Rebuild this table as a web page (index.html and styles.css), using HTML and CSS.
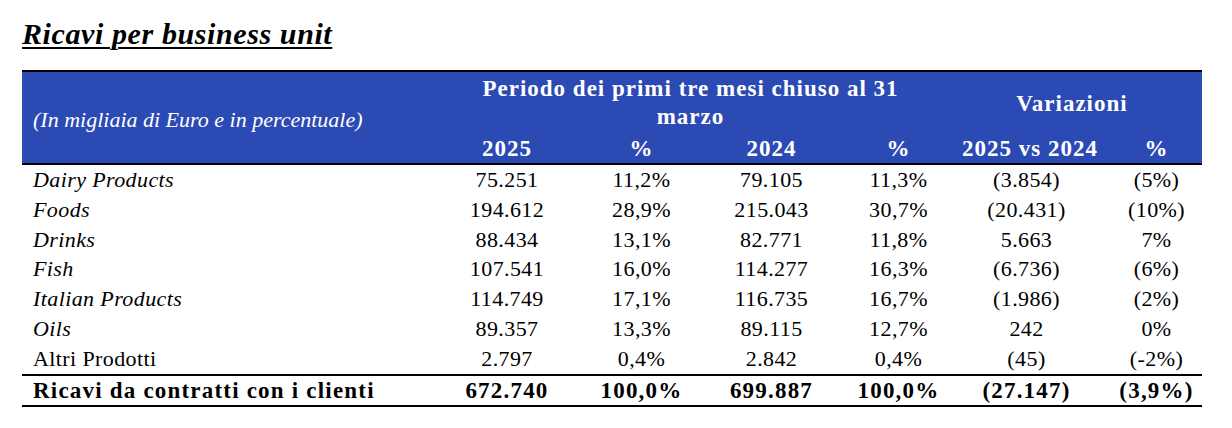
FILE: index.html
```html
<!DOCTYPE html>
<html lang="it">
<head>
<meta charset="utf-8">
<title>Ricavi per business unit</title>
<link rel="stylesheet" href="styles.css">
</head>
<body>
<div class="page">
  <h1 class="title">Ricavi per business unit</h1>
  <table class="rev">
    <colgroup>
      <col class="c-label">
      <col class="c1">
      <col class="c2">
      <col class="c3">
      <col class="c4">
      <col class="c5">
      <col class="c6">
    </colgroup>
    <thead>
      <tr class="h1">
        <th rowspan="2" class="unit">(In migliaia di Euro e in percentuale)</th>
        <th colspan="4" class="period">Periodo dei primi tre mesi chiuso al 31<br>marzo</th>
        <th colspan="2" class="var">Variazioni</th>
      </tr>
      <tr class="h2">
        <th>2025</th>
        <th>%</th>
        <th>2024</th>
        <th>%</th>
        <th>2025 vs 2024</th>
        <th class="last">%</th>
      </tr>
    </thead>
    <tbody>
      <tr><td class="lbl it">Dairy Products</td><td>75.251</td><td>11,2%</td><td>79.105</td><td>11,3%</td><td>(3.854)</td><td class="last">(5%)</td></tr>
      <tr><td class="lbl it">Foods</td><td>194.612</td><td>28,9%</td><td>215.043</td><td>30,7%</td><td>(20.431)</td><td class="last">(10%)</td></tr>
      <tr><td class="lbl it">Drinks</td><td>88.434</td><td>13,1%</td><td>82.771</td><td>11,8%</td><td>5.663</td><td class="last">7%</td></tr>
      <tr><td class="lbl it">Fish</td><td>107.541</td><td>16,0%</td><td>114.277</td><td>16,3%</td><td>(6.736)</td><td class="last">(6%)</td></tr>
      <tr><td class="lbl it">Italian Products</td><td>114.749</td><td>17,1%</td><td>116.735</td><td>16,7%</td><td>(1.986)</td><td class="last">(2%)</td></tr>
      <tr><td class="lbl it">Oils</td><td>89.357</td><td>13,3%</td><td>89.115</td><td>12,7%</td><td>242</td><td class="last">0%</td></tr>
      <tr><td class="lbl">Altri Prodotti</td><td>2.797</td><td>0,4%</td><td>2.842</td><td>0,4%</td><td>(45)</td><td class="last">(-2%)</td></tr>
    </tbody>
    <tfoot>
      <tr><td class="lbl">Ricavi da contratti con i clienti</td><td>672.740</td><td>100,0%</td><td>699.887</td><td>100,0%</td><td>(27.147)</td><td class="last">(3,9%)</td></tr>
    </tfoot>
  </table>
</div>
</body>
</html>
```

FILE: styles.css
```css
html, body {
  margin: 0;
  padding: 0;
  background: #ffffff;
}

body {
  font-family: "Liberation Serif", "Times New Roman", serif;
  color: #000000;
}

.page {
  padding: 18px 30px 0 22px;
}

.title {
  margin: 0 0 20px 0;
  font-size: 30px;
  line-height: 32px;
  font-weight: bold;
  font-style: italic;
  text-decoration: underline;
  text-decoration-thickness: 2px;
  text-underline-offset: 3px;
  letter-spacing: 0.6px;
}

.rev {
  border-collapse: collapse;
  width: 1180px;
  table-layout: fixed;
  font-size: 22px;
  letter-spacing: 0.4px;
}

.c-label { width: 417px; }
.c1 { width: 136px; }
.c2 { width: 133px; }
.c3 { width: 127px; }
.c4 { width: 127px; }
.c5 { width: 129px; }
.c6 { width: 111px; }

.rev thead {
  background: #2c4ab4;
  color: #ffffff;
  border-top: 2px solid #000000;
  border-bottom: 2px solid #000000;
}

.rev th {
  font-weight: bold;
  font-size: 23px;
  letter-spacing: 1px;
  padding: 0;
  text-align: center;
  white-space: nowrap;
}

.rev th.unit {
  text-align: left;
  font-weight: normal;
  font-style: italic;
  padding-left: 11px;
  padding-top: 4px;
  vertical-align: middle;
  font-size: 22px;
  letter-spacing: 0;
}

.h1 th {
  height: 60px;
}

.rev th.period {
  line-height: 28px;
  padding-right: 20px;
  vertical-align: top;
  padding-top: 3px;
}

.rev th.var {
  padding-right: 20px;
  vertical-align: middle;
}

.h2 th {
  height: 28px;
  line-height: 28px;
  vertical-align: middle;
}

.rev td {
  padding: 0;
  height: 29.8px;
  line-height: 29.8px;
  text-align: center;
  white-space: nowrap;
}

.rev .last {
  padding-left: 20px;
}

.rev td.lbl {
  text-align: left;
  padding-left: 11px;
}

.rev td.it {
  font-style: italic;
}

.rev tfoot {
  border-top: 2px solid #000000;
  border-bottom: 2px solid #000000;
}

.rev tfoot td {
  font-weight: bold;
  font-size: 23px;
  letter-spacing: 1.2px;
  height: 29px;
  line-height: 29px;
}
```
